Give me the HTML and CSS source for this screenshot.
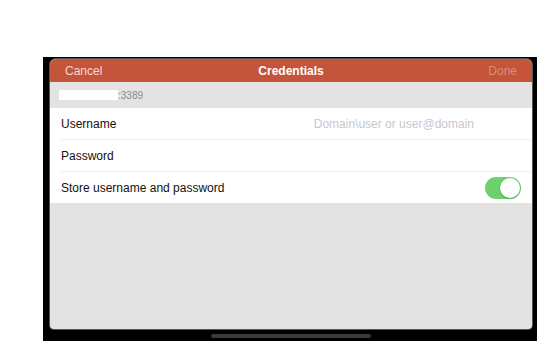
FILE: index.html
```html
<!DOCTYPE html>
<html lang="en">
<head>
  <meta charset="UTF-8">
  <meta name="viewport" content="width=device-width, initial-scale=1.0">
  <title>Credentials</title>
  <link rel="stylesheet" href="styles.css">
</head>
<body>
  <div class="device">
    <div class="sheet">
      <div class="navbar">
        <span class="nav-btn">Cancel</span>
        <span class="nav-title">Credentials</span>
        <span class="nav-btn disabled">Done</span>
      </div>

      <div class="section-header">
        <span class="redacted"></span>
        <span class="port">:3389</span>
      </div>

      <div class="group">
        <div class="row">
          <span class="label">Username</span>
          <span class="placeholder">Domain\user or user@domain</span>
        </div>
        <div class="row">
          <span class="label">Password</span>
        </div>
        <div class="row">
          <span class="label">Store username and password</span>
          <span class="toggle on"><span class="knob"></span></span>
        </div>
      </div>
    </div>
    <div class="home-bar"></div>
  </div>
</body>
</html>
```

FILE: styles.css
```css
body {
  margin: 0;
  background: #fff;
  font-family: "Liberation Sans", Arial, Helvetica, sans-serif;
  font-size: 12px;
  color: #111;
}
.device {
  margin: 57px 0 0 43px;
  width: 494px;
  height: 284px;
  background: #000;
  padding: 2px 5px 0 7px;
  box-sizing: border-box;
  display: flex;
  flex-direction: column;
  align-items: flex-start;
}
.sheet {
  width: 482px;
  height: 270px;
  background: #e3e3e3;
  border-radius: 6px 6px 4px 4px;
  box-shadow: 0 0 0 1px #555;
  overflow: hidden;
  display: flex;
  flex-direction: column;
}
.navbar {
  height: 23px;
  background: #c4543a;
  display: flex;
  align-items: center;
  justify-content: space-between;
  padding: 0 15px;
}
.nav-btn {
  color: #f3dcd5;
  width: 60px;
}
.nav-btn.disabled {
  color: #dc8c78;
  text-align: right;
}
.nav-title {
  color: #fff;
  font-weight: bold;
}
.section-header {
  height: 26px;
  display: flex;
  align-items: center;
  padding-left: 9px;
}
.redacted {
  width: 59px;
  height: 10px;
  background: #fff;
}
.port {
  color: #8a8a8e;
  font-size: 10px;
}
.group {
  background: #fff;
}
.row {
  height: 31px;
  margin-left: 11px;
  padding-right: 11px;
  display: flex;
  align-items: center;
  justify-content: space-between;
  border-bottom: 1px solid #efeff1;
}
.row:last-child {
  border-bottom: none;
}
.placeholder {
  color: #c7c7cc;
  margin-right: 47px;
}
.toggle {
  width: 36px;
  height: 22px;
  border-radius: 11px;
  background: #e5e5ea;
  display: flex;
  align-items: center;
  padding: 1px;
  box-sizing: border-box;
}
.toggle.on {
  background: #6bd26f;
  justify-content: flex-end;
}
.knob {
  width: 20px;
  height: 20px;
  border-radius: 50%;
  background: #fff;
  box-shadow: 0 1px 2px rgba(0, 0, 0, 0.25);
}
.home-bar {
  align-self: center;
  width: 160px;
  height: 4px;
  border-radius: 2px;
  background: #3a3a3c;
  margin-top: 5px;
}
```
